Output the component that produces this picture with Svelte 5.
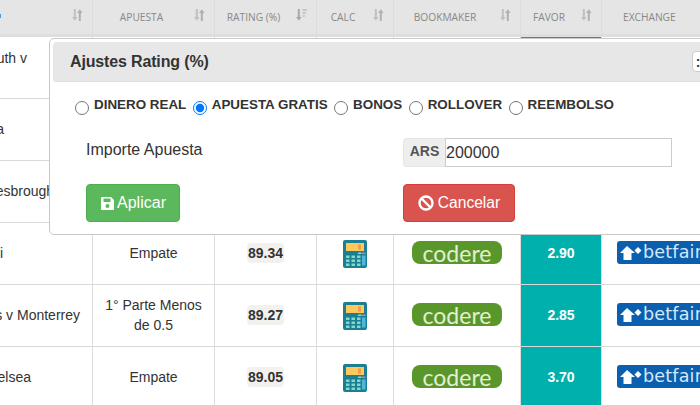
<script>
  const headers = [
    { label: '', sort: 'both', cls: 'first' },
    { label: 'Apuesta', sort: 'both', cls: '' },
    { label: 'Rating (%)', sort: 'desc', cls: '' },
    { label: 'Calc', sort: 'both', cls: '' },
    { label: 'Bookmaker', sort: 'both', cls: '' },
    { label: 'Favor', sort: 'both', cls: 'active' },
    { label: 'Exchange', sort: '', cls: 'last' }
  ];
  const rows = [
    { match: 'Portsmouth v', cls: 'm1', bet: '', rating: '', favor: '' },
    { match: 'Roma', cls: 'm2', bet: '', rating: '', favor: '' },
    { match: 'Middlesbrough v', cls: 'm3', bet: '', rating: '', favor: '' },
    { match: 'Napoli', cls: 'm4', bet: 'Empate', rating: '89.34', favor: '2.90' },
    { match: 'Tigres v Monterrey', cls: 'm5', bet: '1° Parte Menos de 0.5', rating: '89.27', favor: '2.85' },
    { match: 'Arsenal v Chelsea', cls: 'm6', bet: 'Empate', rating: '89.05', favor: '3.70' }
  ];
  const options = ['DINERO REAL', 'APUESTA GRATIS', 'BONOS', 'ROLLOVER', 'REEMBOLSO'];
</script>

<div class="page">
  <div class="head grid">
    {#each headers as h}
      <div class="th {h.cls}">
        <span class="label">{h.label}</span>
        {#if h.sort}
          <svg class="sort" width="11" height="12" viewBox="0 0 11 12">
            <path d="M1.800 0h2v8H5.600L2.800 11.800 0 8H1.800z" fill={h.sort === 'desc' ? '#a8a8a8' : '#c0c0c0'} />
            {#if h.sort === 'desc'}
              <path d="M6.500 0H11v2H6.500zM6.500 3H10v2H6.500zM6.500 6H8.800v2H6.500z" fill="#c8c8c8" />
            {:else}
              <path d="M8.800 12H6.800V4H5L7.800.2 10.600 4H8.800z" fill="#b0b0b0" />
            {/if}
          </svg>
        {/if}
      </div>
    {/each}
  </div>

  {#each rows as r}
    <div class="row grid">
      <div class="td match {r.cls}"><span>{r.match}</span></div>
      <div class="td">{r.bet}</div>
      <div class="td">{#if r.rating}<b class="rating">{r.rating}</b>{/if}</div>
      <div class="td">
        <svg class="calc" width="24" height="28" viewBox="0 0 24 28">
          <rect width="24" height="28" rx="2" fill="#1b7f93" />
          <rect x="3" y="3" width="18" height="8" fill="#fdc95c" />
          <rect x="15" y="4.500" width="3" height="5" fill="#f09a4a" />
          <rect x="15" y="12.500" width="3.500" height="1.500" fill="#8fd6c6" />
          <rect x="19" y="12.500" width="3.500" height="1.500" fill="#ee6f8e" />
          <rect x="19" y="15.500" width="3.500" height="10" fill="#4fb7de" />
          {#each [3, 8.500, 14] as x}
            {#each [15.500, 19.500, 23.500] as y}
              <rect {x} {y} width="3.500" height="2.500" fill="#85d6c4" />
            {/each}
          {/each}
        </svg>
      </div>
      <div class="td"><span class="codere">codere</span></div>
      <div class="td favor">{r.favor}</div>
      <div class="td exch">
        <span class="betfair">
          <svg width="24" height="16" viewBox="0 0 24 16">
            <path d="M8 1 16 8H12.500V15H4.500V8H1z" fill="#fff" />
            <path d="M19 2l3.500 3.500L19 9l-3.500-3.500z" fill="#fff" />
          </svg>
          <span>betfair</span>
        </span>
      </div>
    </div>
  {/each}

  <div class="modal">
    <div class="modal-head">
      <h4>Ajustes Rating (%)</h4>
      <button class="close">::</button>
    </div>
    <div class="options">
      {#each options as o, i}
        <label class="opt"><input type="radio" name="kind" checked={i === 1} /><span>{o}</span></label>
      {/each}
    </div>
    <div class="form">
      <div class="imp">Importe Apuesta</div>
      <div class="group">
        <span class="addon">ARS</span>
        <input class="amount" type="text" value="200000" />
      </div>
      <div>
        <button class="btn green">
          <svg width="15" height="15" viewBox="0 0 15 15">
            <path fill-rule="evenodd" d="M2 1h9l3 3v9a1 1 0 0 1-1 1H2a1 1 0 0 1-1-1V2a1 1 0 0 1 1-1zm1.500 1.500v3.500h7V2.500zM7.500 8a2 2 0 1 0 0 4 2 2 0 0 0 0-4z" fill="#fff" />
          </svg>Aplicar
        </button>
      </div>
      <div>
        <button class="btn red">
          <svg width="16" height="16" viewBox="0 0 16 16">
            <circle cx="8" cy="8" r="6.500" fill="none" stroke="#fff" stroke-width="2.400" />
            <path d="M3.500 3.500l9 9" stroke="#fff" stroke-width="2.400" />
          </svg>Cancelar
        </button>
      </div>
    </div>
  </div>
</div>

<style>
  :global(body) {
    margin: 0;
    background: #fff;
  }
  .page {
    position: relative;
    width: 700px;
    height: 405px;
    overflow: hidden;
    font-family: "Liberation Sans", Arial, sans-serif;
    font-size: 14px;
    line-height: 20px;
    color: #333;
  }
  .grid {
    display: grid;
    grid-template-columns: 93px 122px 102px 77px 127px 81px 1fr;
  }
  .head {
    height: 37px;
    background: #e5e5e5;
    box-sizing: border-box;
    border-bottom: 3px solid #dedede;
  }
  .th {
    position: relative;
    box-sizing: border-box;
    height: 38px;
    padding: 0 32px 4px 8px;
    border-right: 1px solid #dcdcdc;
    display: flex;
    align-items: center;
    justify-content: center;
    font-family: "Open Sans", sans-serif;
    font-size: 10.2px;
    text-transform: uppercase;
    color: #888;
  }
  .th.first::before {
    content: "";
    position: absolute;
    left: 0;
    top: 14px;
    width: 1px;
    height: 4px;
    background: #4a9bd4;
  }
  .th.active {
    box-shadow: inset 0 -1px 0 #1f9e9c;
  }
  .th.last {
    border-right: 0;
    padding: 0 0 4px 21px;
    justify-content: flex-start;
  }
  .sort {
    position: absolute;
    right: 9px;
    top: 9px;
  }
  .row {
    height: 62px;
    box-sizing: border-box;
    border-bottom: 1px solid #d9d9d9;
  }
  .td {
    box-sizing: border-box;
    border-right: 1px solid #ddd;
    padding: 0 8px 2px;
    display: flex;
    align-items: center;
    justify-content: center;
    text-align: center;
    min-width: 0;
  }
  .match {
    justify-content: flex-end;
    white-space: nowrap;
    overflow: hidden;
    padding-left: 0;
  }
  .match span { flex: none; }
  .m1 { padding-right: 65px; padding-bottom: 20px; }
  .m2 { padding-right: 88px; }
  .m3 { padding-right: 27px; }
  .m4 { padding-right: 89px; }
  .m5 { padding-right: 12px; }
  .m6 { padding-right: 61px; }
  .rating {
    background: #f3f1ee;
    border-radius: 4px;
    padding: 0 1px;
  }
  .calc { margin-top: 2px; }
  .codere {
    width: 90px;
    height: 23px;
    border-radius: 8px;
    background: #5a972b;
    color: #e3eed3;
    font-family: "Lato", sans-serif;
    font-size: 23px;
    line-height: 25px;
    text-align: center;
  }
  .favor {
    background: #00b0ad;
    color: #fff;
    font-weight: 700;
  }
  .exch {
    border-right: 0;
    justify-content: flex-start;
    padding-left: 15px;
    overflow: hidden;
  }
  .betfair {
    flex: none;
    width: 120px;
    height: 23px;
    border-radius: 3px;
    background: #0a5fae;
    color: #d5e8f8;
    display: flex;
    align-items: center;
    font-family: "DejaVu Sans", sans-serif;
    font-size: 17.500px;
    line-height: 23px;
    letter-spacing: 0.2px;
  }
  .betfair svg { flex: none; margin-left: 2px; }
  .modal {
    position: absolute;
    left: 49px;
    top: 38px;
    width: 800px;
    height: 197px;
    box-sizing: border-box;
    padding: 3px;
    background: #fff;
    border: 1px solid #c8c8c8;
    border-radius: 5px;
  }
  .modal-head {
    height: 40px;
    box-sizing: border-box;
    background: #e7e7e7;
    border-bottom: 1px solid #ddd;
    border-radius: 4px;
    display: flex;
    align-items: center;
    padding: 0 17px;
  }
  h4 {
    margin: 0;
    font-size: 16px;
    letter-spacing: -0.15px;
    font-weight: 700;
    color: #333;
  }
  .close {
    margin-left: 483px;
    width: 30px;
    height: 21px;
    padding: 0 0 0 3px;
    text-align: left;
    background: #fff;
    border: 1px solid #ccc;
    border-radius: 4px;
    color: #333;
    font: 700 14px "Liberation Sans", sans-serif;
  }
  .options {
    display: flex;
    margin: 13px 0 0 22px;
    gap: 6.500px;
  }
  .opt {
    display: flex;
    font-weight: 700;
    font-size: 13.400px;
    line-height: 20px;
    height: 20px;
  }
  .opt input {
    width: 14px;
    height: 14px;
    margin: 6px 5px 0 0;
  }
  .form {
    display: grid;
    grid-template-columns: 317px 269px;
    margin: 24px 0 0 33px;
    row-gap: 17px;
  }
  .imp {
    font-size: 16px;
    line-height: 22px;
  }
  .group {
    display: flex;
    height: 29px;
    margin-top: -1px;
  }
  .addon {
    width: 42px;
    box-sizing: border-box;
    background: #eee;
    border: 1px solid #e6e6e6;
    border-right: 0;
    border-radius: 4px 0 0 4px;
    font-weight: 700;
    color: #555;
    text-align: center;
    line-height: 24px;
  }
  .amount {
    flex: 1;
    min-width: 0;
    box-sizing: border-box;
    border: 1px solid #ccc;
    padding: 1px 0 0 0;
    font: 16px "Liberation Sans", sans-serif;
    color: #333;
    outline: 0;
    border-radius: 0;
  }
  .btn {
    height: 38px;
    box-sizing: border-box;
    display: inline-flex;
    align-items: center;
    justify-content: center;
    gap: 2px;
    border-radius: 4px;
    color: #fff;
    font: 16px "Liberation Sans", sans-serif;
    padding: 0;
  }
  .green {
    width: 94px;
    background: #5cb85c;
    border: 1px solid #4cae4c;
  }
  .red {
    width: 112px;
    background: #d9534f;
    border: 1px solid #d43f3a;
    gap: 4px;
    font-size: 15.600px;
  }
</style>
